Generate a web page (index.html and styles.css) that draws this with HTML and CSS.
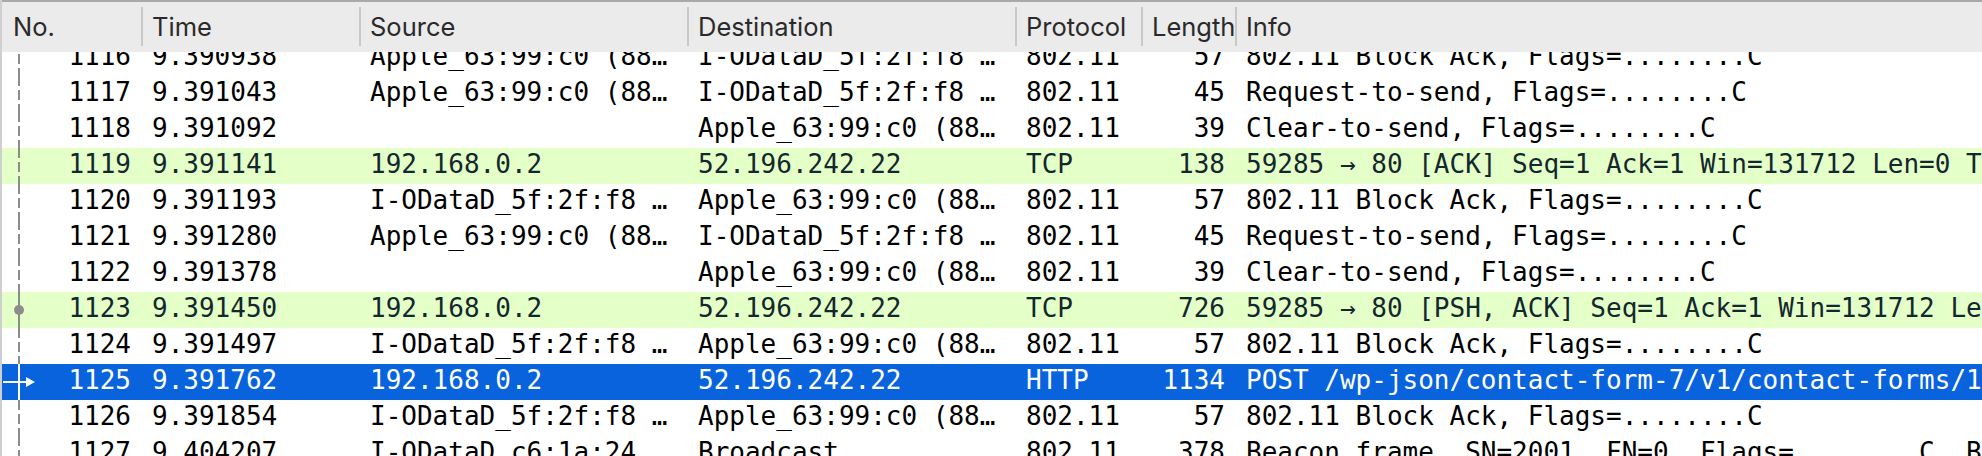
FILE: index.html
```html
<!DOCTYPE html>
<html>
<head>
<meta charset="utf-8">
<link rel="stylesheet" href="styles.css">
</head>
<body>
<div class="packet-list">
  <div class="header">
    <div class="hcell c-no first">No.</div>
    <div class="hcell c-time">Time</div>
    <div class="hcell c-src">Source</div>
    <div class="hcell c-dst">Destination</div>
    <div class="hcell c-proto">Protocol</div>
    <div class="hcell c-len">Length</div>
    <div class="hcell c-info">Info</div>
  </div>
  <div class="viewport">
    <div class="rows">
      <div class="row"><div class="cell c-no"><span class="gut dash"></span>1116</div><div class="cell c-time">9.390938</div><div class="cell c-src">Apple_63:99:c0 (88…</div><div class="cell c-dst">I-ODataD_5f:2f:f8 …</div><div class="cell c-proto">802.11</div><div class="cell c-len">57</div><div class="cell c-info">802.11 Block Ack, Flags=........C</div></div>
      <div class="row"><div class="cell c-no"><span class="gut dash"></span>1117</div><div class="cell c-time">9.391043</div><div class="cell c-src">Apple_63:99:c0 (88…</div><div class="cell c-dst">I-ODataD_5f:2f:f8 …</div><div class="cell c-proto">802.11</div><div class="cell c-len">45</div><div class="cell c-info">Request-to-send, Flags=........C</div></div>
      <div class="row"><div class="cell c-no"><span class="gut dash"></span>1118</div><div class="cell c-time">9.391092</div><div class="cell c-src"></div><div class="cell c-dst">Apple_63:99:c0 (88…</div><div class="cell c-proto">802.11</div><div class="cell c-len">39</div><div class="cell c-info">Clear-to-send, Flags=........C</div></div>
      <div class="row green"><div class="cell c-no"><span class="gut dash"></span>1119</div><div class="cell c-time">9.391141</div><div class="cell c-src">192.168.0.2</div><div class="cell c-dst">52.196.242.22</div><div class="cell c-proto">TCP</div><div class="cell c-len">138</div><div class="cell c-info">59285 → 80 [ACK] Seq=1 Ack=1 Win=131712 Len=0 TSval=1523401 TSecr=0</div></div>
      <div class="row"><div class="cell c-no"><span class="gut dash"></span>1120</div><div class="cell c-time">9.391193</div><div class="cell c-src">I-ODataD_5f:2f:f8 …</div><div class="cell c-dst">Apple_63:99:c0 (88…</div><div class="cell c-proto">802.11</div><div class="cell c-len">57</div><div class="cell c-info">802.11 Block Ack, Flags=........C</div></div>
      <div class="row"><div class="cell c-no"><span class="gut dash"></span>1121</div><div class="cell c-time">9.391280</div><div class="cell c-src">Apple_63:99:c0 (88…</div><div class="cell c-dst">I-ODataD_5f:2f:f8 …</div><div class="cell c-proto">802.11</div><div class="cell c-len">45</div><div class="cell c-info">Request-to-send, Flags=........C</div></div>
      <div class="row"><div class="cell c-no"><span class="gut dash"></span>1122</div><div class="cell c-time">9.391378</div><div class="cell c-src"></div><div class="cell c-dst">Apple_63:99:c0 (88…</div><div class="cell c-proto">802.11</div><div class="cell c-len">39</div><div class="cell c-info">Clear-to-send, Flags=........C</div></div>
      <div class="row green"><div class="cell c-no"><span class="gut solid"></span><span class="dot"></span>1123</div><div class="cell c-time">9.391450</div><div class="cell c-src">192.168.0.2</div><div class="cell c-dst">52.196.242.22</div><div class="cell c-proto">TCP</div><div class="cell c-len">726</div><div class="cell c-info">59285 → 80 [PSH, ACK] Seq=1 Ack=1 Win=131712 Len=672</div></div>
      <div class="row"><div class="cell c-no"><span class="gut dash"></span>1124</div><div class="cell c-time">9.391497</div><div class="cell c-src">I-ODataD_5f:2f:f8 …</div><div class="cell c-dst">Apple_63:99:c0 (88…</div><div class="cell c-proto">802.11</div><div class="cell c-len">57</div><div class="cell c-info">802.11 Block Ack, Flags=........C</div></div>
      <div class="row selected"><div class="cell c-no"><span class="gut solid white"></span><svg class="arrow" width="40" height="36" viewBox="0 0 40 36"><path d="M3 18H30" stroke="#fff" stroke-width="2"/><path d="M26 13L35 18L26 23Z" fill="#fff"/></svg>1125</div><div class="cell c-time">9.391762</div><div class="cell c-src">192.168.0.2</div><div class="cell c-dst">52.196.242.22</div><div class="cell c-proto">HTTP</div><div class="cell c-len">1134</div><div class="cell c-info">POST /wp-json/contact-form-7/v1/contact-forms/19/feedback HTTP/1.1</div></div>
      <div class="row"><div class="cell c-no"><span class="gut dash"></span>1126</div><div class="cell c-time">9.391854</div><div class="cell c-src">I-ODataD_5f:2f:f8 …</div><div class="cell c-dst">Apple_63:99:c0 (88…</div><div class="cell c-proto">802.11</div><div class="cell c-len">57</div><div class="cell c-info">802.11 Block Ack, Flags=........C</div></div>
      <div class="row"><div class="cell c-no"><span class="gut dash"></span>1127</div><div class="cell c-time">9.404207</div><div class="cell c-src">I-ODataD_c6:1a:24</div><div class="cell c-dst">Broadcast</div><div class="cell c-proto">802.11</div><div class="cell c-len">378</div><div class="cell c-info">Beacon frame, SN=2001, FN=0, Flags=........C, BI=100</div></div>
    </div>
  </div>
</div>
</body>
</html>
```

FILE: styles.css
```css
html, body {
  margin: 0;
  padding: 0;
  background: #ffffff;
}
.packet-list {
  width: 1982px;
  height: 456px;
  overflow: hidden;
  border-left: 2px solid #cfcfcf;
  box-sizing: border-box;
}
.header {
  display: flex;
  height: 52px;
  background: #ebebeb;
  border-top: 2px solid #a9a9a9;
  box-sizing: border-box;
  font-family: Inter, "Liberation Sans", Arial, sans-serif;
  font-size: 25.5px;
  color: #2a2a2a;
}
.hcell {
  height: 39px;
  line-height: 39px;
  margin-top: 5px;
  border-left: 2px solid #c8c8c8;
  padding-left: 9px;
  box-sizing: border-box;
  white-space: nowrap;
  overflow: hidden;
}
.hcell.first {
  border-left-color: transparent;
}
.c-no { width: 139px; flex: none; }
.c-time { width: 218px; flex: none; }
.c-src { width: 328px; flex: none; }
.c-dst { width: 328px; flex: none; }
.c-proto { width: 126px; flex: none; }
.c-len { width: 94px; flex: none; }
.c-info { flex: 1; min-width: 0; }
.hcell.c-len { padding-right: 0; }

.viewport {
  height: 404px;
  overflow: hidden;
}
.rows {
  margin-top: -12px;
  font-family: "DejaVu Sans Mono", monospace;
  font-size: 26px;
  color: #000;
}
.row {
  display: flex;
  height: 36px;
}
.row.green {
  background: #e4ffc7;
  color: #12272e;
}
.row.selected {
  background: #0863dc;
  color: #ffffff;
}
.cell {
  box-sizing: border-box;
  padding: 1px 0 0 9px;
  line-height: 30px;
  white-space: nowrap;
  overflow: hidden;
  border-left: 2px solid transparent;
}
.cell.c-no {
  position: relative;
  text-align: right;
  padding: 1px 10px 0 0;
  border-left: none;
}
.cell.c-len {
  text-align: right;
  padding-right: 10px;
  padding-left: 0;
}
.gut {
  position: absolute;
  left: 16px;
  top: 0;
  width: 2px;
  height: 36px;
}
.gut.dash {
  background: repeating-linear-gradient(to bottom, #8c8c8c 0 10px, transparent 10px 14px);
}
.gut.solid {
  background: #8c8c8c;
}
.gut.white {
  background: #ffffff;
}
.dot {
  position: absolute;
  left: 12px;
  top: 13px;
  width: 10px;
  height: 10px;
  border-radius: 50%;
  background: #8c8c8c;
}
.arrow {
  position: absolute;
  left: -2px;
  top: 0;
}
```
